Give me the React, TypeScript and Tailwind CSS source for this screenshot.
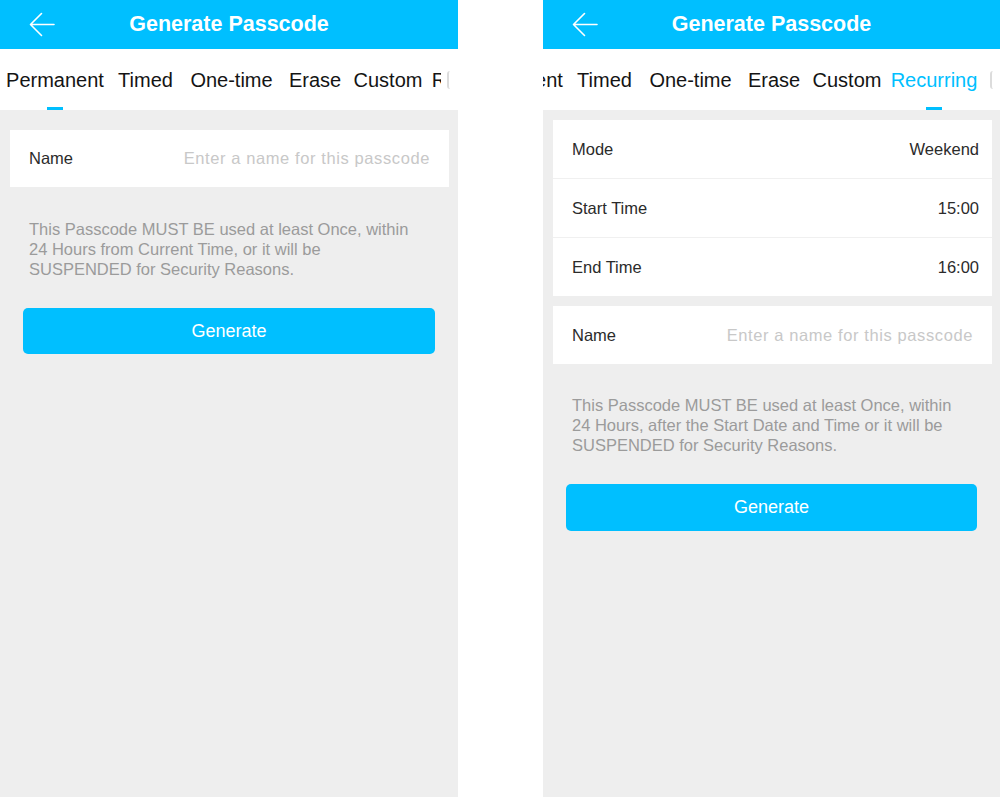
import React from "react";

type Tab = { label: string; w: number };
const TABS: Tab[] = [
  { label: "Permanent", w: 110 },
  { label: "Timed", w: 71 },
  { label: "One-time", w: 101 },
  { label: "Erase", w: 66 },
  { label: "Custom", w: 80 },
  { label: "Recurring", w: 94 },
];

function BackArrow() {
  return (
    <svg width="26" height="25" viewBox="0 0 26 25" fill="none" className="block">
      <path
        d="M25 12.5 H2 M12.5 1.5 L1.5 12.5 L12.5 23.5"
        stroke="white"
        strokeWidth="1.6"
        strokeLinecap="round"
        strokeLinejoin="round"
      />
    </svg>
  );
}

function Header() {
  return (
    <div className="grid h-[49px] grid-cols-[1fr_auto_1fr] items-center bg-[#00bfff]">
      <div className="pl-[29px]">
        <BackArrow />
      </div>
      <div className="text-[21.5px] font-bold leading-none text-white">Generate Passcode</div>
      <div />
    </div>
  );
}

function TabBar({ active, blueText, offset }: { active: number; blueText: boolean; offset: boolean }) {
  return (
    <div className="flex h-[61px] items-stretch bg-white">
      <div className="w-[441px] shrink-0 overflow-hidden">
        <div className={offset ? "ml-[-84px] flex h-full" : "flex h-full"}>
          {TABS.map((t, i) => (
            <div
              key={t.label}
              className="relative flex h-full shrink-0 items-center justify-center whitespace-nowrap text-[20px]"
              style={{ width: t.w }}
            >
              <span className={i === active && blueText ? "text-[#00bfff]" : "text-[#141414]"}>{t.label}</span>
              {i === active && (
                <span className="absolute bottom-0 left-1/2 h-[3px] w-[16px] -translate-x-1/2 bg-[#00bfff]" />
              )}
            </div>
          ))}
        </div>
      </div>
      <div className="flex flex-1 items-center">
        <div className="ml-[6px] h-[18px] w-[3px] rounded-l-full border-l-2 border-[#dcdcdc]" />
      </div>
    </div>
  );
}

function Row({ label, value, placeholder, last }: { label: string; value?: string; placeholder?: string; last?: boolean }) {
  return (
    <div
      className={
        "flex items-center justify-between pl-[19px] " +
        (placeholder ? "pr-[19px] " : "pr-[13px] ") +
        (last ? "h-[58px]" : "h-[59px] border-b border-[#f0f0f0]")
      }
    >
      <span className="text-[16.5px] text-[#2b2b2b]">{label}</span>
      {placeholder ? (
        <span className="text-[16.5px] tracking-[0.6px] text-[#c8c8c8]">{placeholder}</span>
      ) : (
        <span className="text-[16.5px] text-[#2b2b2b]">{value}</span>
      )}
    </div>
  );
}

function Info({ lines }: { lines: string[] }) {
  return (
    <div className="pl-[29px] text-[16.5px] leading-[20px] text-[#9b9b9b]">
      {lines.map((l) => (
        <div key={l} className="whitespace-nowrap">
          {l}
        </div>
      ))}
    </div>
  );
}

function GenerateButton({ h }: { h: string }) {
  return (
    <div className="px-[23px]">
      <div className={"flex items-center justify-center rounded-[5px] bg-[#00bfff] text-[18px] text-white " + h}>
        Generate
      </div>
    </div>
  );
}

function LeftPanel() {
  return (
    <div className="flex w-[458px] shrink-0 flex-col">
      <Header />
      <TabBar active={0} blueText={false} offset={false} />
      <div className="flex-1 bg-[#eeeeee] pt-[20px]">
        <div className="ml-[10px] mr-[9px] bg-white">
          <div className="flex h-[57px] items-center justify-between pl-[19px] pr-[19px]">
            <span className="text-[16.5px] text-[#2b2b2b]">Name</span>
            <span className="text-[16.5px] tracking-[0.6px] text-[#c8c8c8]">Enter a name for this passcode</span>
          </div>
        </div>
        <div className="mt-[32px]">
          <Info
            lines={[
              "This Passcode MUST BE used at least Once, within",
              "24 Hours from Current Time, or it will be",
              "SUSPENDED for Security Reasons.",
            ]}
          />
        </div>
        <div className="mt-[29px]">
          <GenerateButton h="h-[46px]" />
        </div>
      </div>
    </div>
  );
}

function RightPanel() {
  return (
    <div className="flex w-[457px] shrink-0 flex-col">
      <Header />
      <TabBar active={5} blueText={true} offset={true} />
      <div className="flex-1 bg-[#eeeeee] pt-[10px]">
        <div className="ml-[10px] mr-[8px] bg-white">
          <Row label="Mode" value="Weekend" />
          <Row label="Start Time" value="15:00" />
          <Row label="End Time" value="16:00" last />
        </div>
        <div className="ml-[10px] mr-[8px] mt-[10px] bg-white">
          <Row label="Name" placeholder="Enter a name for this passcode" last />
        </div>
        <div className="mt-[31px]">
          <Info
            lines={[
              "This Passcode MUST BE used at least Once, within",
              "24 Hours, after the Start Date and Time or it will be",
              "SUSPENDED for Security Reasons.",
            ]}
          />
        </div>
        <div className="mt-[29px]">
          <GenerateButton h="h-[47px]" />
        </div>
      </div>
    </div>
  );
}

export default function App() {
  return (
    <div
      className="flex h-[797px] w-[1000px] gap-[85px] overflow-hidden bg-white"
      style={{ fontFamily: '"Liberation Sans", Arial, sans-serif' }}
    >
      <LeftPanel />
      <RightPanel />
    </div>
  );
}
